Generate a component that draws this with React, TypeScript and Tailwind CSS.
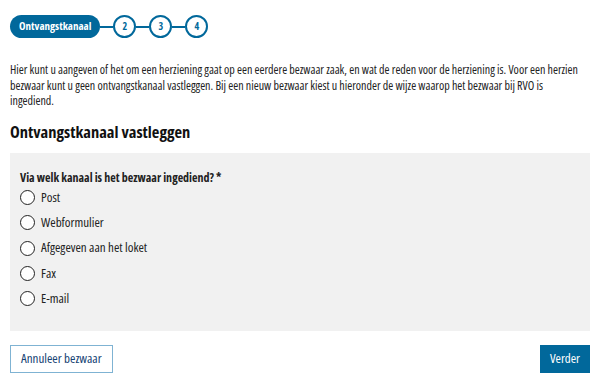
import React from "react";

const options = ["Post", "Webformulier", "Afgegeven aan het loket", "Fax", "E-mail"];

export default function App() {
  return (
    <div className="w-[600px] h-[386px] bg-white px-[10px] text-[#222] font-['Open_Sans',sans-serif] [font-stretch:condensed]">
      <div className="pt-[15px] flex items-center h-[38px]">
        <div className="h-[23px] px-[9px] rounded-full bg-[#01689b] text-white text-[11px] font-bold flex items-center">
          Ontvangstkanaal
        </div>
        {["2", "3", "4"].map((n) => (
          <div key={n} className="flex items-center">
            <div className="w-[13px] h-[2px] bg-[#01689b]" />
            <div className="w-[23px] h-[23px] rounded-full border-2 border-[#01689b] text-[#01689b] text-[10px] font-bold flex items-center justify-center">
              {n}
            </div>
          </div>
        ))}
      </div>
      <p className="mt-[24px] w-[576px] text-[12px] leading-[15.5px] text-[#222]">
        Hier kunt u aangeven of het om een herziening gaat op een eerdere bezwaar zaak, en wat de reden voor de herziening is. Voor een herzien bezwaar kunt u geen ontvangstkanaal vastleggen. Bij een nieuw bezwaar kiest u hieronder de wijze waarop het bezwaar bij RVO is ingediend.
      </p>
      <h2 className="mt-[13.5px] text-[16.5px] leading-[20px] font-bold text-[#111]">Ontvangstkanaal vastleggen</h2>
      <div className="mt-[11px] h-[178px] bg-[#f1f1f1] px-[10px] pt-[18px]">
        <div className="text-[12px] font-bold leading-[14px]">Via welk kanaal is het bezwaar ingediend? *</div>
        <div className="flex flex-col">
          {options.map((o) => (
            <label key={o} className="h-[25.3px] flex items-center gap-[6px] text-[13px]">
              <span className="w-[15px] h-[15px] rounded-full border-[1.5px] border-[#222] bg-white" />
              <span>{o}</span>
            </label>
          ))}
        </div>
      </div>
      <div className="mt-[14px] flex justify-between">
        <button className="h-[28px] px-[10px] border border-[#7fb3d3] text-[#154273] text-[13px] bg-white">
          Annuleer bezwaar
        </button>
        <button className="h-[28px] px-[10px] bg-[#01689b] text-white text-[13px]">Verder</button>
      </div>
    </div>
  );
}
